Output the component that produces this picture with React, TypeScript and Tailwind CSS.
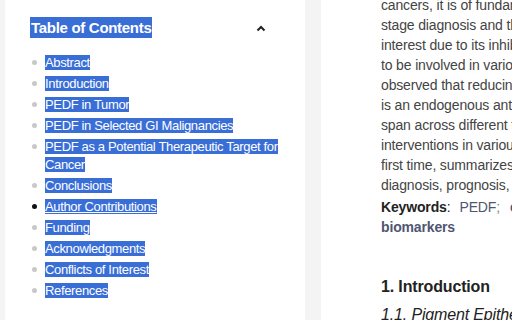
const sections = [
  'Abstract',
  'Introduction',
  'PEDF in Tumor',
  'PEDF in Selected GI Malignancies',
  'PEDF as a Potential Therapeutic Target for Cancer',
  'Conclusions',
  'Author Contributions',
  'Funding',
  'Acknowledgments',
  'Conflicts of Interest',
  'References',
];

const abstractLines = [
  'cancers, it is of fundamental importance to identify',
  'stage diagnosis and therapy. PEDF has attracted',
  'interest due to its inhibitory effects and has been shown',
  'to be involved in various biological processes. It was',
  'observed that reducing PEDF expression promotes tumor',
  'is an endogenous antiangiogenic factor whose functions',
  'span across different tumor types. Therapeutic',
  'interventions in various cancers. This review, for the',
  'first time, summarizes the role of PEDF in the',
  'diagnosis, prognosis, and treatment of GI cancers.',
];

export default function App() {
  return (
    <div className="flex h-[320px] w-[512px] overflow-hidden bg-[#f4f4f4] font-['Liberation_Sans',Arial,sans-serif]">
      <aside className="ml-[5px] w-[300px] shrink-0 bg-white pl-[25px] pr-[20px] pt-[17px]">
        <div className="flex items-center justify-between">
          <h2 className="bg-[#3a6ed7] px-[1px] text-[15px] font-bold leading-[21px] tracking-[-0.3px] text-white">
            Table of Contents
          </h2>
          <svg width="10" height="7" viewBox="0 0 10 7" className="mr-[19px] mt-[2px]">
            <path d="M1.5 5.5 L5 2 L8.5 5.5" fill="none" stroke="#222" strokeWidth="2" />
          </svg>
        </div>
        <ul className="mt-[16px] flex flex-col gap-[3px] text-[13px] leading-[18px] tracking-[-0.35px]">
          {sections.map((s) => (
            <li key={s} className="flex items-start">
              <span
                className={
                  'mt-[6px] ml-[2px] mr-[8px] h-[5px] w-[5px] shrink-0 rounded-full ' +
                  (s === 'Author Contributions' ? 'bg-[#111]' : 'bg-[#c8c8c8]')
                }
              />
              <span className="min-w-0">
                <span
                  className={
                    'bg-[#3a6ed7] text-white [box-decoration-break:clone] ' +
                    (s === 'Author Contributions' ? 'underline' : '')
                  }
                >
                  {s}
                </span>
              </span>
            </li>
          ))}
        </ul>
      </aside>
      <main className="ml-[16px] min-w-0 flex-1 overflow-hidden bg-white pl-[60px]">
        <div className="-mt-[5px] w-[420px] text-[14px] leading-[20px] tracking-[-0.15px] text-[#444]">
          {abstractLines.map((l) => (
            <div key={l} className="whitespace-nowrap">
              {l}
            </div>
          ))}
          <div className="mt-[2px] whitespace-nowrap">
            <span className="font-bold text-[#222]">Keywords</span>
            <span className="text-[#222]">:</span>
            <span className="ml-[9px] text-[#4f5671]">PEDF</span>
            <span className="text-[#888]">;</span>
            <span className="ml-[10px] font-bold text-[#4f5671]">colorectal cancer;</span>
          </div>
          <div className="font-bold text-[#4f5671]">biomarkers</div>
          <h2 className="mt-[40px] whitespace-nowrap text-[16px] font-bold leading-[20px] text-[#222]">
            1. Introduction
          </h2>
          <h3 className="mt-[8px] whitespace-nowrap text-[16px] italic leading-[20px] text-[#222]">
            1.1. Pigment Epithelial-Derived Factor
          </h3>
        </div>
      </main>
    </div>
  );
}
